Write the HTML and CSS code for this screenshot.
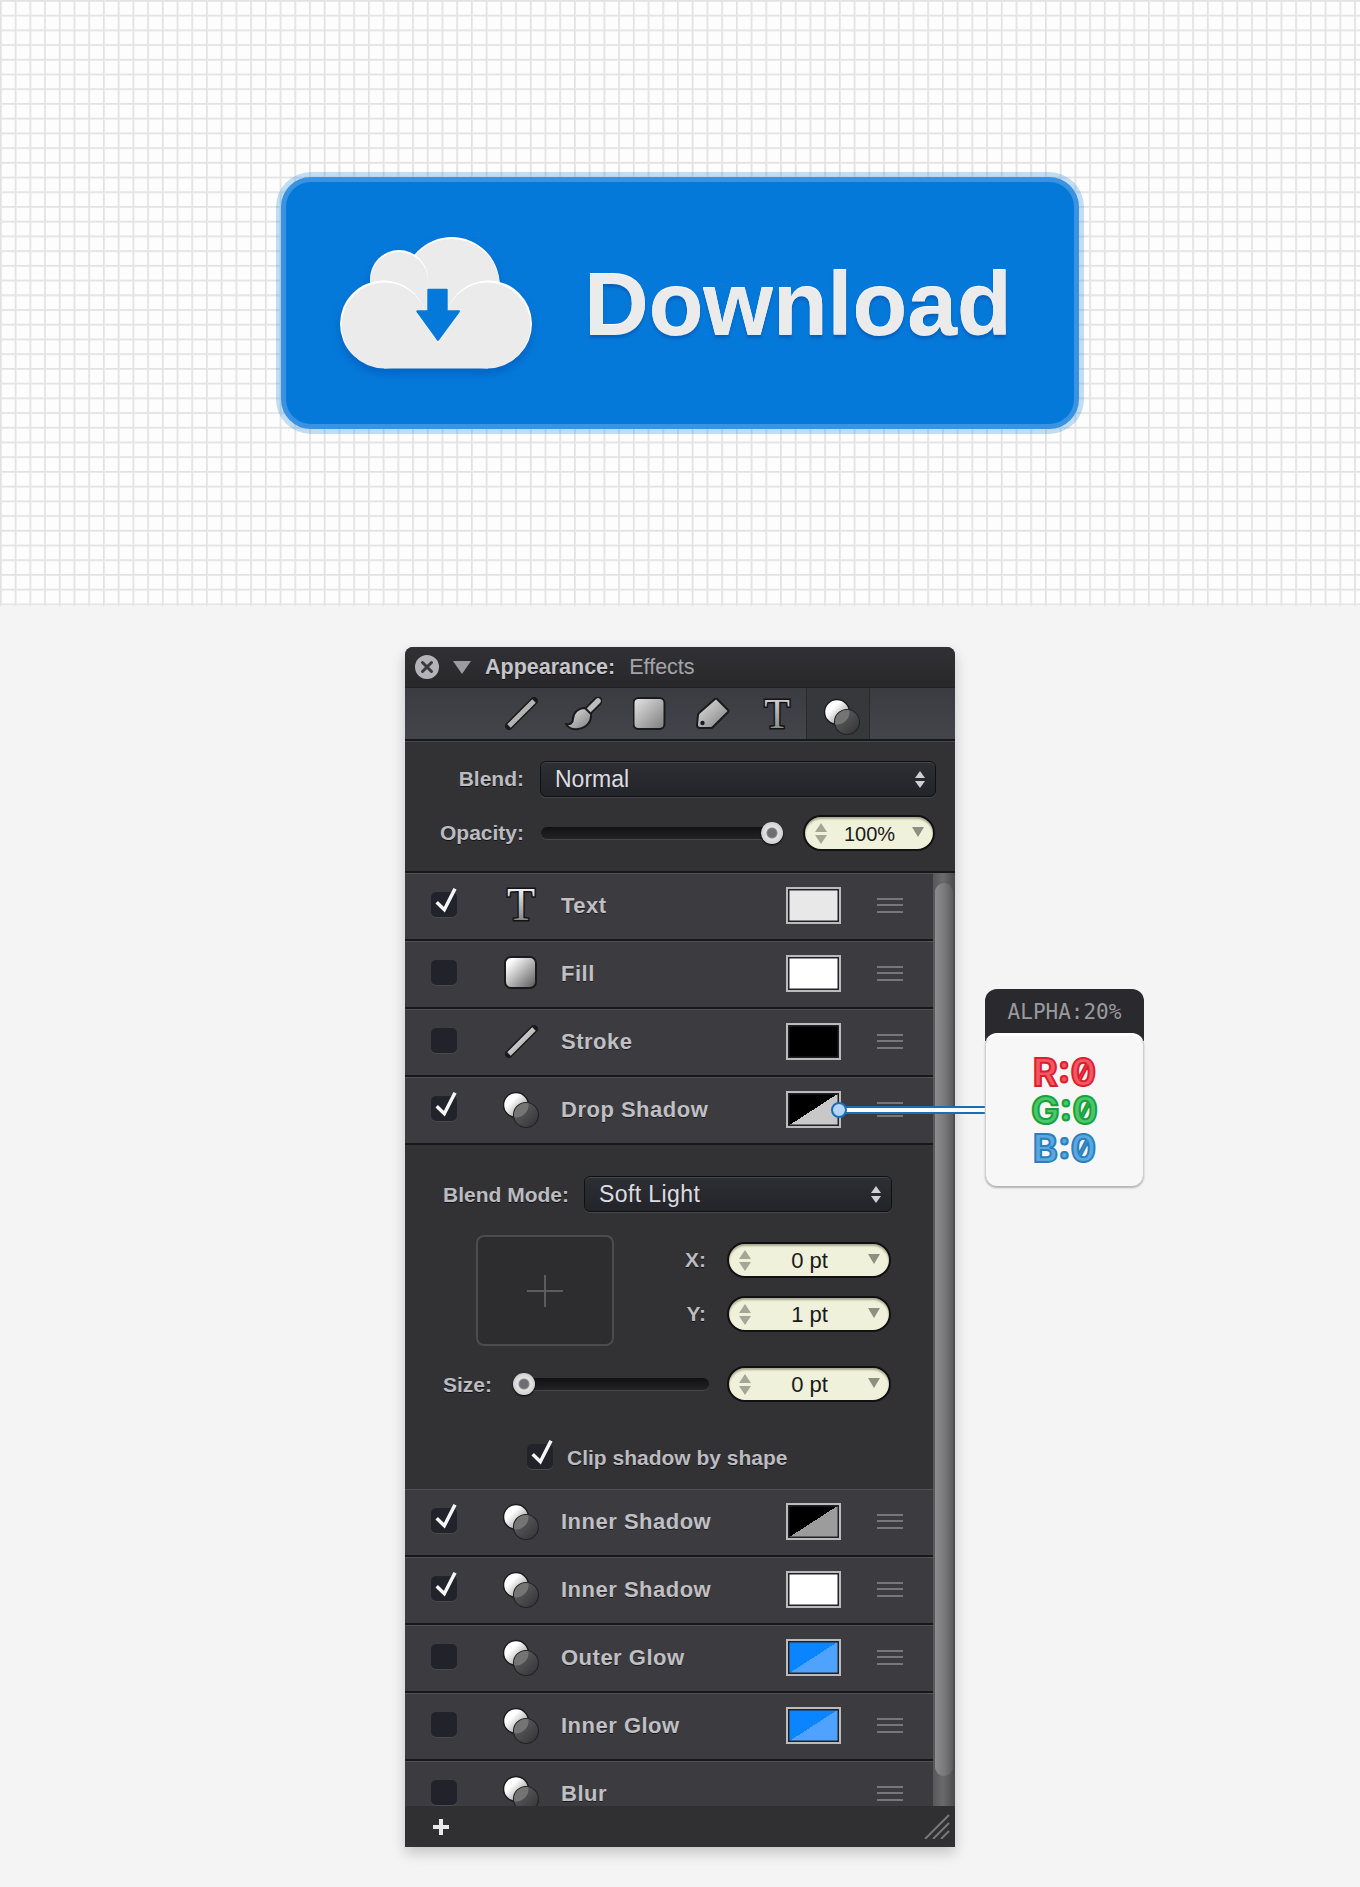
FILE: index.html
```html
<!DOCTYPE html>
<html lang="en">
<head>
<meta charset="utf-8">
<title>Download button</title>
<link rel="stylesheet" href="styles.css">
</head>
<body>
<svg class="defs" aria-hidden="true">
  <defs>
    <linearGradient id="gLight" x1="0" y1="0" x2="1" y2="1"><stop offset="0.15" stop-color="#fff"/><stop offset="1" stop-color="#555"/></linearGradient>
    <linearGradient id="gTool" x1="0" y1="0" x2="1" y2="1"><stop offset="0" stop-color="#e6e6e6"/><stop offset="1" stop-color="#7c7c7c"/></linearGradient>
    <linearGradient id="gTextRow" x1="0" y1="0" x2="0" y2="1"><stop offset="0.1" stop-color="#fff"/><stop offset="1" stop-color="#666"/></linearGradient>
    <linearGradient id="gTextTool" x1="0" y1="0" x2="0" y2="1"><stop offset="0.1" stop-color="#d8d8d8"/><stop offset="1" stop-color="#777"/></linearGradient>
    <linearGradient id="gBall" x1="0.1" y1="0.1" x2="0.9" y2="0.9"><stop offset="0.3" stop-color="#fff"/><stop offset="1" stop-color="#888"/></linearGradient>
    <linearGradient id="gDark" x1="0.1" y1="0.1" x2="0.9" y2="0.9"><stop offset="0" stop-color="#606062"/><stop offset="1" stop-color="#37373a"/></linearGradient>
    <clipPath id="ballClip"><circle cx="13" cy="14" r="12.5"/></clipPath>
    <symbol id="i-effect" viewBox="0 0 36 37">
      <circle cx="13" cy="14" r="12.5" fill="url(#gBall)" stroke="#1c1c1e" stroke-width="1.5"/>
      <circle cx="23" cy="24" r="12.5" fill="url(#gDark)" stroke="#232325" stroke-width="1.2"/>
      <circle cx="23" cy="24" r="12" fill="#747475" clip-path="url(#ballClip)"/>
    </symbol>
    <symbol id="i-line-row" viewBox="0 0 33 33">
      <line x1="4" y1="29" x2="29" y2="4" stroke="#1a1a1c" stroke-width="8" stroke-linecap="round"/>
      <line x1="4" y1="29" x2="29" y2="4" stroke="url(#gLineRow)" stroke-width="5"/>
    </symbol>
    <linearGradient id="gLineRow" gradientUnits="userSpaceOnUse" x1="4" y1="4" x2="29" y2="29"><stop offset="0" stop-color="#fff"/><stop offset="1" stop-color="#888"/></linearGradient>
    <linearGradient id="gLineTool" gradientUnits="userSpaceOnUse" x1="4" y1="4" x2="29" y2="29"><stop offset="0" stop-color="#c8c8c8"/><stop offset="1" stop-color="#a0a0a0"/></linearGradient>
    <symbol id="i-line-tool" viewBox="0 0 33 33">
      <line x1="4" y1="29" x2="29" y2="4" stroke="#1a1a1c" stroke-width="8" stroke-linecap="round"/>
      <line x1="4" y1="29" x2="29" y2="4" stroke="url(#gLineTool)" stroke-width="5"/>
    </symbol>
  </defs>
</svg>

<main class="page">
  <section class="hero">
    <div class="dl-button">
      <svg class="cloud" width="192" height="132" viewBox="0 0 192 132" aria-hidden="true">
        <circle cx="111.7" cy="48" r="48" fill="#fff"/>
        <circle cx="111.7" cy="50" r="48" fill="#ebebeb"/>
        <circle cx="59" cy="42" r="29" fill="#fff"/>
        <circle cx="59" cy="44" r="29" fill="#ebebeb"/>
        <circle cx="43.5" cy="87" r="43.5" fill="#fff"/>
        <circle cx="148.5" cy="87" r="43.5" fill="#fff"/>
        <circle cx="44.5" cy="88.5" r="43" fill="#ebebeb"/>
        <circle cx="147.5" cy="88.5" r="43" fill="#ebebeb"/>
        <rect x="44" y="88" width="104" height="43.5" fill="#ebebeb"/>
        <path d="M88.3 54h18.4v21.8h12.3L98 104.500 77.300 75.800h11z" fill="#f6f6f6" stroke="#f6f6f6" stroke-width="2" stroke-linejoin="round"/>
        <path d="M88.300 52.700h18.400v21.600h12.300L98 103 77.300 74.300h11z" fill="#0579d9" stroke="#0579d9" stroke-width="2" stroke-linejoin="round"/>
      </svg>
      <span class="dl-label">Download</span>
    </div>
  </section>

  <section class="stage">
    <div class="panel">
      <header class="titlebar">
        <svg class="close" width="24" height="24" viewBox="0 0 24 24" aria-hidden="true">
          <circle cx="12" cy="12" r="12" fill="#b4b4b8"/>
          <path d="M7.500 7.500l9 9M16.500 7.500l-9 9" stroke="#3a3a3e" stroke-width="3" stroke-linecap="round"/>
        </svg>
        <span class="disclosure"></span>
        <span class="title-strong">Appearance:</span>
        <span class="title-light">Effects</span>
      </header>

      <nav class="toolbar">
        <span class="tool"><svg width="33" height="33" aria-hidden="true"><use href="#i-line-tool"/></svg></span>
        <span class="tool tool-brush">
          <svg width="37" height="34" viewBox="0 0 37 34" aria-hidden="true">
            <path d="M33 4 23 14" stroke="#1a1a1c" stroke-width="9" stroke-linecap="round"/>
            <path d="M33 4 23 14" stroke="#bdbdbd" stroke-width="5.500" stroke-linecap="round"/>
            <path d="M20 11C13 11 8 16 8 22 8 26 5 28 1 27 3 31 8 33 13 32 21 31 27 25 26 17Z" fill="url(#gTool)" stroke="#1a1a1c" stroke-width="2"/>
          </svg>
        </span>
        <span class="tool"><svg width="33" height="33" viewBox="0 0 33 33" aria-hidden="true"><rect x="0.500" y="1" width="31" height="31" rx="5" fill="url(#gTool)" stroke="#1a1a1c" stroke-width="2"/></svg></span>
        <span class="tool">
          <svg width="34" height="33" viewBox="0 0 34 33" aria-hidden="true">
            <path d="M21 2 32 13a1.500 1.500 0 0 1 0 2L17 30a3 3 0 0 1-2 1H4a3 3 0 0 1-3-3L2 18a4 4 0 0 1 1-2L19 2a1.500 1.500 0 0 1 2 0Z" fill="url(#gTool)" stroke="#1a1a1c" stroke-width="2"/>
            <circle cx="6.500" cy="26" r="2.200" fill="#1a1a1c"/>
          </svg>
        </span>
        <span class="tool">
          <svg width="34" height="50" viewBox="0 0 34 50" aria-hidden="true"><text class="t-glyph t-tool" x="17" y="39" text-anchor="middle">T</text></svg>
        </span>
        <span class="tool tool-active"><svg class="active-icon" width="36" height="37" aria-hidden="true"><use href="#i-effect"/></svg></span>
      </nav>

      <section class="blend-section">
        <div class="ctl-row blend-row">
          <label class="ctl-label top-label">Blend:</label>
          <div class="select select-main"><span class="sel-text">Normal</span><span class="updown light"><i class="up"></i><i class="down"></i></span></div>
        </div>
        <div class="ctl-row opacity-row">
          <label class="ctl-label top-label">Opacity:</label>
          <div class="slider slider-opacity"><span class="knob knob-end"></span></div>
          <div class="stepper stepper-opacity"><span class="updown"><i class="up"></i><i class="down"></i></span><span class="value">100%</span><i class="drop"></i></div>
        </div>
      </section>

      <div class="scroller">
        <div class="list">
          <div class="row">
            <span class="check on"><svg class="tick" width="30" height="30" viewBox="0 0 30 30" aria-hidden="true"><path d="M4.700 16.300l7.600 7.400L23 2.700" /></svg></span>
            <span class="row-icon"><svg width="34" height="54" viewBox="0 0 34 54" aria-hidden="true"><text class="t-glyph t-row" x="17" y="42" text-anchor="middle">T</text></svg></span>
            <span class="row-name">Text</span>
            <span class="swatch sw-text"></span>
            <span class="handle"><i></i><i></i><i></i></span>
          </div>
          <div class="row">
            <span class="check"></span>
            <span class="row-icon"><svg width="36" height="36" viewBox="0 0 36 36" aria-hidden="true"><rect x="2" y="2" width="31" height="31" rx="6" fill="url(#gLight)" stroke="#1a1a1c" stroke-width="2"/></svg></span>
            <span class="row-name">Fill</span>
            <span class="swatch sw-white"></span>
            <span class="handle"><i></i><i></i><i></i></span>
          </div>
          <div class="row">
            <span class="check"></span>
            <span class="row-icon"><svg width="33" height="33" aria-hidden="true"><use href="#i-line-row"/></svg></span>
            <span class="row-name">Stroke</span>
            <span class="swatch sw-black"></span>
            <span class="handle"><i></i><i></i><i></i></span>
          </div>
          <div class="row">
            <span class="check on"><svg class="tick" width="30" height="30" viewBox="0 0 30 30" aria-hidden="true"><path d="M4.700 16.300l7.600 7.400L23 2.700" /></svg></span>
            <span class="row-icon"><svg width="36" height="37" aria-hidden="true"><use href="#i-effect"/></svg></span>
            <span class="row-name">Drop Shadow</span>
            <span class="swatch sw-shadow"></span>
            <span class="handle"><i></i><i></i><i></i></span>
          </div>

          <div class="details">
            <div class="d-blend">
              <label class="ctl-label d-blend-label">Blend Mode:</label>
              <div class="select select-detail"><span class="sel-text">Soft Light</span><span class="updown light"><i class="up"></i><i class="down"></i></span></div>
            </div>
            <div class="d-pos">
              <div class="origin"><span class="cross"></span></div>
              <div class="xy">
                <div class="xy-row">
                  <label class="ctl-label xy-label">X:</label>
                  <div class="stepper stepper-detail"><span class="updown"><i class="up"></i><i class="down"></i></span><span class="value">0 pt</span><i class="drop"></i></div>
                </div>
                <div class="xy-row">
                  <label class="ctl-label xy-label">Y:</label>
                  <div class="stepper stepper-detail"><span class="updown"><i class="up"></i><i class="down"></i></span><span class="value">1 pt</span><i class="drop"></i></div>
                </div>
              </div>
            </div>
            <div class="d-size">
              <label class="ctl-label size-label">Size:</label>
              <div class="slider slider-size"><span class="knob knob-start"></span></div>
              <div class="stepper stepper-detail"><span class="updown"><i class="up"></i><i class="down"></i></span><span class="value">0 pt</span><i class="drop"></i></div>
            </div>
            <div class="d-clip">
              <span class="check on"><svg class="tick" width="30" height="30" viewBox="0 0 30 30" aria-hidden="true"><path d="M4.700 16.300l7.600 7.400L23 2.700" /></svg></span>
              <span class="clip-label">Clip shadow by shape</span>
            </div>
          </div>

          <div class="row">
            <span class="check on"><svg class="tick" width="30" height="30" viewBox="0 0 30 30" aria-hidden="true"><path d="M4.700 16.300l7.600 7.400L23 2.700" /></svg></span>
            <span class="row-icon"><svg width="36" height="37" aria-hidden="true"><use href="#i-effect"/></svg></span>
            <span class="row-name">Inner Shadow</span>
            <span class="swatch sw-inner"></span>
            <span class="handle"><i></i><i></i><i></i></span>
          </div>
          <div class="row">
            <span class="check on"><svg class="tick" width="30" height="30" viewBox="0 0 30 30" aria-hidden="true"><path d="M4.700 16.300l7.600 7.400L23 2.700" /></svg></span>
            <span class="row-icon"><svg width="36" height="37" aria-hidden="true"><use href="#i-effect"/></svg></span>
            <span class="row-name">Inner Shadow</span>
            <span class="swatch sw-white"></span>
            <span class="handle"><i></i><i></i><i></i></span>
          </div>
          <div class="row">
            <span class="check"></span>
            <span class="row-icon"><svg width="36" height="37" aria-hidden="true"><use href="#i-effect"/></svg></span>
            <span class="row-name">Outer Glow</span>
            <span class="swatch sw-blue"></span>
            <span class="handle"><i></i><i></i><i></i></span>
          </div>
          <div class="row">
            <span class="check"></span>
            <span class="row-icon"><svg width="36" height="37" aria-hidden="true"><use href="#i-effect"/></svg></span>
            <span class="row-name">Inner Glow</span>
            <span class="swatch sw-blue"></span>
            <span class="handle"><i></i><i></i><i></i></span>
          </div>
          <div class="row">
            <span class="check"></span>
            <span class="row-icon"><svg width="36" height="37" aria-hidden="true"><use href="#i-effect"/></svg></span>
            <span class="row-name">Blur</span>
            <span class="swatch-empty"></span>
            <span class="handle"><i></i><i></i><i></i></span>
          </div>
        </div>
        <div class="scrollbar"><span class="thumb"></span></div>
      </div>

      <footer class="panel-foot">
        <svg width="16" height="16" viewBox="0 0 16 16" aria-hidden="true"><path d="M8 0v16M0 8h16" stroke="#e8e8ec" stroke-width="4"/></svg>
        <svg width="26" height="25" viewBox="0 0 26 25" aria-hidden="true"><path d="M1 25 25 1M9 25 25 9M17 25 25 17" stroke="#77777b" stroke-width="2"/></svg>
      </footer>

      <div class="connector"></div>
      <span class="connector-dot"></span>

      <aside class="tip">
        <div class="tip-head">ALPHA:20%</div>
        <div class="tip-card">
          <div class="rgb rgb-r">R:0</div>
          <div class="rgb rgb-g">G:0</div>
          <div class="rgb rgb-b">B:0</div>
        </div>
      </aside>
    </div>
  </section>
</main>
</body>
</html>
```

FILE: styles.css
```css
* { box-sizing: border-box; }
html, body { margin: 0; padding: 0; }
body {
  width: 1360px;
  height: 1887px;
  overflow: hidden;
  background: #f4f4f4;
  font-family: "Liberation Sans", Arial, sans-serif;
}
.defs { position: absolute; width: 0; height: 0; }

/* hero */
.hero {
  height: 606px;
  display: flex;
  align-items: center;
  justify-content: center;
  background-color: #fdfdfd;
  background-image:
    linear-gradient(to right, #ebebeb 0, #dcdcdc .8px, #ebebeb 1.6px, transparent 1.6px),
    linear-gradient(to bottom, #ebebeb 0, #dcdcdc .8px, #ebebeb 1.6px, transparent 1.6px);
  background-size: 14.72px 14.72px;
}
.dl-button {
  width: 798px;
  height: 252px;
  display: flex;
  align-items: center;
  gap: 52px;
  padding-left: 54px;
  background: #0579d9;
  border: 5px solid #3a92e2;
  border-radius: 30px;
  box-shadow: 0 0 0 5px rgba(5, 121, 217, .24);
}
.cloud { flex: none; filter: drop-shadow(0 5px 5px rgba(0, 70, 170, .45)); }
.dl-label {
  padding-top: 4px;
  font-size: 89.500px;
  font-weight: 700;
  line-height: 1;
  color: #ebebeb;
  text-shadow: 0 -1.5px 0 #fff, 0 3px 3px rgba(0, 60, 150, .4);
}

/* panel */
.stage { padding: 41px 0 0 405px; }
.panel {
  position: relative;
  width: 550px;
  height: 1200px;
  display: flex;
  flex-direction: column;
  border-radius: 8px 8px 0 0;
  background: #323235;
  box-shadow: 0 6px 14px rgba(0, 0, 0, .2);
}
.titlebar {
  height: 40px;
  flex: none;
  display: flex;
  align-items: center;
  padding-left: 10px;
  background: linear-gradient(#313135, #28282b);
  border-radius: 8px 8px 0 0;
  font-size: 21.5px;
}
.disclosure {
  width: 0;
  height: 0;
  margin-left: 14px;
  border-left: 9px solid transparent;
  border-right: 9px solid transparent;
  border-top: 13px solid #9c9ca0;
}
.title-strong { margin-left: 14px; font-weight: 700; color: #c6c6ca; text-shadow: 0 1px 0 #111; }
.title-light { margin-left: 14px; color: #a4a4a8; }

.toolbar {
  height: 54px;
  flex: none;
  display: flex;
  padding-left: 84px;
  background: linear-gradient(#3b3c41, #44454b);
  border-top: 1px solid #232326;
  border-bottom: 2px solid #18181a;
}
.tool {
  width: 64px;
  display: flex;
  align-items: center;
  justify-content: center;
}
.tool-brush svg { margin-left: -3px; }
.tool-active {
  width: 62px;
  margin-left: -2px;
  padding: 6px 0 0 7px;
  background: #37383c;
  box-shadow: -1px 0 0 #2a2a2d, 1px 0 0 #2a2a2d;
}
.t-glyph {
  font-family: "Liberation Serif", serif;
  font-size: 42px;
  stroke: #141416;
  stroke-width: 3px;
  paint-order: stroke fill;
}
.t-tool { fill: url(#gTextTool); }
.t-row { fill: url(#gTextRow); font-size: 46px; }

.blend-section {
  height: 132px;
  flex: none;
  padding-top: 19px;
  background: #323235;
  border-top: 1px solid #48484c;
  border-bottom: 2px solid #18181a;
}
.ctl-row { display: flex; align-items: center; }
.blend-row { height: 36px; }
.opacity-row { height: 36px; margin-top: 18px; }
.ctl-label {
  font-size: 21px;
  font-weight: 700;
  color: #bcbcc0;
  text-shadow: 0 1px 0 #111;
}
.top-label { width: 119px; text-align: right; }

.select {
  height: 36px;
  display: flex;
  align-items: center;
  justify-content: space-between;
  padding: 0 10px 0 14px;
  border: 1px solid #101012;
  border-radius: 6px;
  background: linear-gradient(#2e2f34, #232429);
  box-shadow: inset 0 1px 0 #45454a, 0 1px 0 #47474b;
  font-size: 23px;
  color: #dcdce0;
}
.sel-text { padding-top: 1px; }
.select-main { width: 396px; margin-left: 16px; }
.select-detail { width: 308px; letter-spacing: .4px; }

.updown { display: flex; flex-direction: column; gap: 3px; }
.updown i { display: block; width: 0; height: 0; border-left: 6px solid transparent; border-right: 6px solid transparent; }
.updown .up { border-bottom: 9px solid #a6a696; }
.updown .down { border-top: 9px solid #a6a696; }
.updown.light i { border-left-width: 5px; border-right-width: 5px; }
.updown.light .up { border-bottom: 7px solid #d0d0d4; }
.updown.light .down { border-top: 7px solid #d0d0d4; }

.slider {
  position: relative;
  height: 12px;
  border-radius: 6px;
  background: linear-gradient(#111113, #232325);
  box-shadow: 0 1px 0 #47474b;
}
.slider-opacity { width: 240px; margin-left: 17px; }
.slider-size { width: 195px; }
.knob {
  position: absolute;
  top: -5px;
  width: 22px;
  height: 22px;
  border-radius: 50%;
  background: radial-gradient(circle, #6e6e70 0 4px, #8a8a8c 5px, #e4e4e4 6px, #bcbcbc 100%);
  box-shadow: 0 1px 2px #000;
}
.knob-end { right: -2px; }
.knob-start { left: -1px; }

.stepper {
  height: 36px;
  display: flex;
  align-items: center;
  padding: 0 9px 0 10px;
  border: 2px solid #111113;
  border-radius: 18px;
  background: #eff1db;
  box-shadow: inset 0 2px 2px #a8a98c;
  font-size: 20px;
  color: #1a1a1a;
}
.stepper-opacity { width: 132px; margin-left: 22px; }
.stepper-detail { width: 164px; font-size: 22px; }
.value { flex: 1; padding-top: 2px; text-align: center; }
.drop {
  width: 0;
  height: 0;
  margin-top: -3px;
  border-left: 6.500px solid transparent;
  border-right: 6.500px solid transparent;
  border-top: 10px solid #8f8f80;
}

/* effect list */
.scroller { flex: none; height: 933px; display: flex; overflow: hidden; }
.list { width: 528px; flex: none; }
.row {
  height: 68px;
  display: flex;
  align-items: center;
  padding: 0 30px 3px 26px;
  background: #3c3c40;
  border-top: 1px solid #505055;
  border-bottom: 2px solid #18181a;
}
.check {
  position: relative;
  width: 26px;
  height: 25px;
  flex: none;
  margin-top: -2px;
  border-radius: 5px;
  background: #22232a;
  box-shadow: 0 1px 0 #4a4a4e;
}
.tick {
  position: absolute;
  left: 1px;
  top: -6px;
  overflow: visible;
}
.tick path { fill: none; stroke: #f6f6f8; stroke-width: 3.500px; stroke-linejoin: miter; }
.row-icon {
  width: 36px;
  height: 37px;
  flex: none;
  margin-left: 46px;
  display: flex;
  align-items: center;
  justify-content: center;
}
.row-name {
  flex: 1;
  margin-left: 22px;
  padding-top: 2px;
  font-size: 22px;
  font-weight: 700;
  letter-spacing: .5px;
  color: #c0c0c4;
  text-shadow: 0 1px 0 #1a1a1c;
}
.swatch, .swatch-empty { width: 55px; height: 37px; flex: none; margin-right: 36px; }
.swatch {
  border: 2px solid #bbbbbb;
  box-shadow: inset 0 0 0 1.500px #222226;
}
.sw-text { background: #e8e8e8; }
.sw-white { background: #fff; }
.sw-black { background: #000; }
.sw-shadow { background: linear-gradient(to bottom right, #000 50%, #c8c8c8 50%); }
.sw-inner { background: linear-gradient(to bottom right, #000 50%, #9c9c9c 50%); }
.sw-blue { background: linear-gradient(to bottom right, #0a84ff 50%, #4fa3ff 50%); }
.handle { width: 26px; flex: none; display: flex; flex-direction: column; gap: 4.500px; }
.handle i { display: block; height: 2px; background: #77777b; }

/* detail block */
.details { height: 344px; padding-top: 31px; background: #323235; }
.d-blend { display: flex; align-items: center; padding-left: 38px; }
.d-blend-label { width: 141px; padding-top: 2px; }
.d-pos { display: flex; height: 111px; margin-top: 23px; padding-left: 71px; }
.origin {
  position: relative;
  width: 138px;
  height: 111px;
  border: 2px solid #4c4c50;
  border-radius: 8px;
  background: #2d2d30;
}
.cross {
  position: absolute;
  left: 50%;
  top: 50%;
  width: 36px;
  height: 32px;
  transform: translate(-50%, -50%);
  background:
    linear-gradient(#5c5c60, #5c5c60) center / 100% 2px no-repeat,
    linear-gradient(#5c5c60, #5c5c60) center / 2px 100% no-repeat;
}
.xy { padding-top: 7px; display: flex; flex-direction: column; gap: 18px; }
.xy-row { display: flex; align-items: center; }
.xy-label { width: 92px; margin-right: 21px; text-align: right; }
.d-size { display: flex; align-items: center; height: 36px; margin-top: 20px; padding-left: 38px; }
.size-label { width: 71px; padding-top: 2px; }
.d-size .stepper { margin-left: 18px; }
.d-clip { display: flex; align-items: center; margin-top: 42px; padding-left: 122px; }
.clip-label {
  margin-left: 14px;
  padding-top: 2px;
  font-size: 21px;
  font-weight: 700;
  color: #bcbcc0;
  text-shadow: 0 1px 0 #111;
}

.scrollbar {
  width: 22px;
  flex: none;
  padding: 10px 2px 0 2px;
  background: linear-gradient(to right, #58585b, #6a6a6d 45%, #4a4a4d);
}
.thumb {
  display: block;
  height: 893px;
  border-radius: 9px;
  background: linear-gradient(to right, #8c8c8e, #78787a 55%, #5c5c5e);
}

.panel-foot {
  height: 41px;
  flex: none;
  display: flex;
  align-items: center;
  justify-content: space-between;
  padding: 0 5px 0 28px;
  background: #303033;
}

/* colour callout */
.connector {
  position: absolute;
  left: 435px;
  top: 459px;
  width: 145px;
  height: 8px;
  background: #fff;
  border-top: 2.500px solid #1b6db8;
  border-bottom: 2.500px solid #1b6db8;
}
.connector-dot {
  position: absolute;
  left: 426px;
  top: 455px;
  width: 16px;
  height: 16px;
  border: 2px solid #1b6db8;
  border-radius: 50%;
  background: #b5d4f6;
}
.tip {
  position: absolute;
  left: 580px;
  top: 342px;
  width: 159px;
}
.tip-head {
  height: 52px;
  padding-top: 11px;
  border-radius: 12px 12px 0 0;
  background: #2a2a2e;
  text-align: center;
  font-family: "DejaVu Sans Mono", monospace;
  font-size: 21px;
  line-height: 24px;
  color: #9a9a9e;
}
.tip-card {
  height: 153px;
  margin-top: -8px;
  position: relative;
  padding-top: 17px;
  border-top: 3px solid #fff;
  border-left: 1px solid #d0d0d0;
  border-right: 1px solid #d0d0d0;
  border-radius: 12px;
  background: #f7f7f8;
  box-shadow: 0 2px 2px #b4b4b4;
}
.rgb {
  height: 38px;
  text-align: center;
  font-family: Inter, "DejaVu Sans", sans-serif;
  font-variant-numeric: slashed-zero;
  font-feature-settings: "zero" 1;
  font-size: 38px;
  font-weight: 700;
  line-height: 38px;
  -webkit-text-stroke-width: 2px;
}
.rgb-r { color: #f25763; -webkit-text-stroke-color: #dd1f2d; }
.rgb-g { color: #4bc76c; -webkit-text-stroke-color: #18a23b; }
.rgb-b { color: #5aa8e0; -webkit-text-stroke-color: #2c7fbe; }
```
